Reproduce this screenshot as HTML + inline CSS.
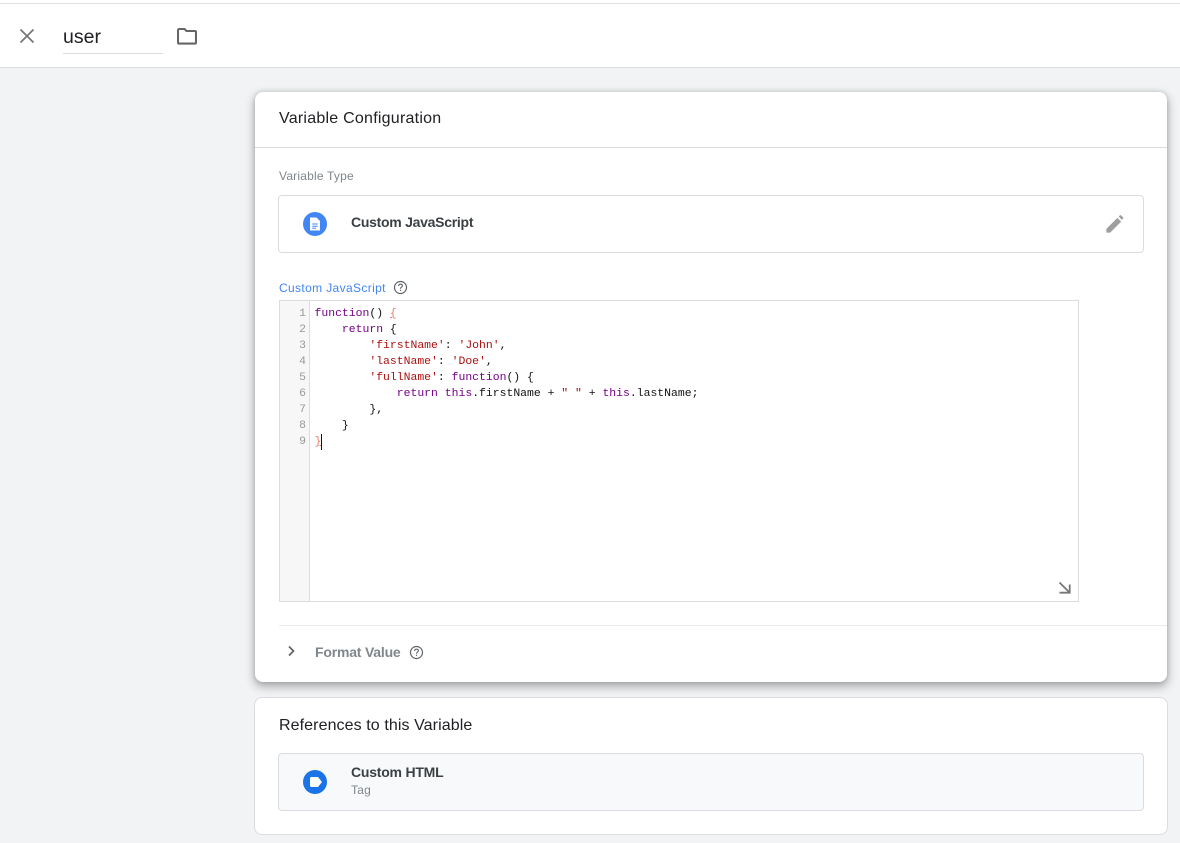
<!DOCTYPE html>
<html lang="en">
<head>
<meta charset="utf-8">
<title>user</title>
<style>
*{box-sizing:border-box}
html,body{margin:0;padding:0}
body{width:1180px;height:843px;overflow:hidden;background:#f1f3f4;font-family:"Liberation Sans",sans-serif;position:relative;color:#202124}
.a{position:absolute;white-space:nowrap}
.code{font-family:"Liberation Mono",monospace;font-size:11.43px;line-height:16px;color:#111;white-space:pre}
.k{color:#708}.s{color:#a11}.b{color:#ee7a66;text-decoration:underline}
</style>
</head>
<body>
<div class="a" style="left:0;top:0;width:1180px;height:68px;background:#fff;border-bottom:1px solid #dadce0"></div>
<div class="a" style="left:0;top:3px;width:1180px;height:1px;background:#e0e0e0"></div>
<svg class="a" style="left:17px;top:26px" width="20" height="20" viewBox="0 0 20 20"><path d="M3.500 3.500L16.500 16.500M16.500 3.500L3.500 16.500" stroke="#757575" stroke-width="1.700" fill="none"/></svg>
<div class="a" style="left:63px;top:26px;font-size:19.500px;line-height:23px;color:#202124">user</div>
<div class="a" style="left:63px;top:53px;width:100px;height:1px;background:#dadce0"></div>
<svg class="a" style="left:177px;top:28px" width="20" height="17" viewBox="0 0 20 17"><path d="M1 2.300C1 1.500 1.600 1 2.300 1H7.500L9.500 3H18C18.600 3 19 3.500 19 4V14.500C19 15.200 18.500 15.600 17.800 15.600H2.200C1.500 15.600 1 15.200 1 14.500Z" stroke="#666" stroke-width="2.100" fill="none"/></svg>

<div class="a" style="left:255px;top:92px;width:912px;height:590px;background:#fff;border-radius:8px;box-shadow:0 4px 9px 1px rgba(60,64,67,.38),0 0 4px rgba(60,64,67,.2)"></div>
<div class="a" style="left:279px;top:109px;font-size:16px;line-height:20px;color:#202124;letter-spacing:.24px">Variable Configuration</div>
<div class="a" style="left:255px;top:147px;width:912px;height:1px;background:#dadce0"></div>
<div class="a" style="left:279px;top:169px;font-size:12px;line-height:15px;color:#80868b;letter-spacing:.2px">Variable Type</div>
<div class="a" style="left:278px;top:195px;width:866px;height:58px;border:1px solid #dadce0;border-radius:4px;background:#fff"></div>
<svg class="a" style="left:303px;top:212px" width="24" height="24" viewBox="0 0 24 24"><circle cx="12" cy="12" r="12" fill="#4285f4"/><path d="M7 5.500H13.500L17 9V18.500H7Z" fill="#fff"/><path d="M9.300 12H14.700M9.300 14.200H14.700M9.300 16.300H13" stroke="#4285f4" stroke-width="1"/></svg>
<div class="a" style="left:351px;top:214px;font-size:14px;line-height:17px;font-weight:bold;color:#3c4043;letter-spacing:-.27px">Custom JavaScript</div>
<svg class="a" style="left:1105px;top:214px" width="20" height="20" viewBox="0 0 22 22"><path d="M1.500 20.500V16.300L13.600 4.200L17.800 8.400L5.700 20.500ZM15 2.800L16.300 1.500C16.700 1.100 17.300 1.100 17.700 1.500L19.900 3.700C20.300 4.100 20.300 4.700 19.900 5.100L18.600 6.400Z" fill="#9e9e9e"/></svg>
<div class="a" style="left:279px;top:281px;font-size:12px;line-height:15px;color:#4285f4;letter-spacing:.36px">Custom JavaScript</div>
<svg class="a" style="left:393px;top:280px" width="15" height="15" viewBox="0 0 15 15"><circle cx="7.500" cy="7.500" r="6" stroke="#5f6368" stroke-width="1.200" fill="none"/><path d="M5.600 6C5.600 4.900 6.400 4.200 7.500 4.200C8.600 4.200 9.400 4.900 9.400 5.800C9.400 7.100 7.500 7.100 7.500 8.700" stroke="#5f6368" stroke-width="1.100" fill="none"/><rect x="6.900" y="9.700" width="1.200" height="1.200" fill="#5f6368"/></svg>

<div class="a" style="left:279px;top:300px;width:800px;height:302px;border:1px solid #dadce0;background:#fff"></div>
<div class="a" style="left:280px;top:301px;width:30px;height:300px;background:#f7f7f7;border-right:1px solid #ddd"></div>
<div class="a code" style="left:280px;top:306px;width:26px;text-align:right;color:#999">1
2
3
4
5
6
7
8
9</div>
<div class="a code" style="left:314.500px;top:306px"><span class="k">function</span>() <span class="b">{</span>
    <span class="k">return</span> {
        <span class="s">'firstName'</span>: <span class="s">'John'</span>,
        <span class="s">'lastName'</span>: <span class="s">'Doe'</span>,
        <span class="s">'fullName'</span>: <span class="k">function</span>() {
            <span class="k">return</span> <span class="k">this</span>.firstName + <span class="s">" "</span> + <span class="k">this</span>.lastName;
        },
    }
<span class="b">}</span></div>
<div class="a" style="left:321px;top:434px;width:1px;height:16px;background:#111"></div>
<svg class="a" style="left:1058px;top:581px" width="13" height="13" viewBox="0 0 13 13"><path d="M1.500 1.500L11 11M11.700 3.500V11.700H1.500" stroke="#777" stroke-width="1.800" fill="none"/></svg>

<div class="a" style="left:279px;top:625px;width:888px;height:1px;background:#e8eaed"></div>
<svg class="a" style="left:285px;top:645px" width="12" height="12" viewBox="0 0 12 12"><path d="M4 1.500L8.500 6L4 10.500" stroke="#5f6368" stroke-width="1.700" fill="none"/></svg>
<div class="a" style="left:315px;top:644px;font-size:14px;line-height:17px;font-weight:bold;color:#80868b;letter-spacing:-.2px">Format Value</div>
<svg class="a" style="left:409px;top:645px" width="15" height="15" viewBox="0 0 15 15"><circle cx="7.500" cy="7.500" r="6" stroke="#5f6368" stroke-width="1.200" fill="none"/><path d="M5.600 6C5.600 4.900 6.400 4.200 7.500 4.200C8.600 4.200 9.400 4.900 9.400 5.800C9.400 7.100 7.500 7.100 7.500 8.700" stroke="#5f6368" stroke-width="1.100" fill="none"/><rect x="6.900" y="9.700" width="1.200" height="1.200" fill="#5f6368"/></svg>

<div class="a" style="left:254px;top:697px;width:914px;height:138px;background:#fff;border:1px solid #dadce0;border-radius:8px"></div>
<div class="a" style="left:279px;top:716px;font-size:16px;line-height:20px;color:#202124;letter-spacing:.09px">References to this Variable</div>
<div class="a" style="left:278px;top:753px;width:866px;height:58px;border:1px solid #dadce0;border-radius:4px;background:#f8f9fa"></div>
<svg class="a" style="left:303px;top:770px" width="24" height="24" viewBox="0 0 24 24"><circle cx="12" cy="12" r="12" fill="#1a73e8"/><path d="M7 8.500C7 7.700 7.500 7 8.300 7H15L19 12L15 17H8.300C7.500 17 7 16.300 7 15.500Z" fill="#fff"/></svg>
<div class="a" style="left:351px;top:764px;font-size:14px;line-height:17px;font-weight:bold;color:#3c4043;letter-spacing:-.22px">Custom HTML</div>
<div class="a" style="left:351px;top:783px;font-size:12px;line-height:15px;color:#80868b;letter-spacing:.2px">Tag</div>
</body>
</html>
